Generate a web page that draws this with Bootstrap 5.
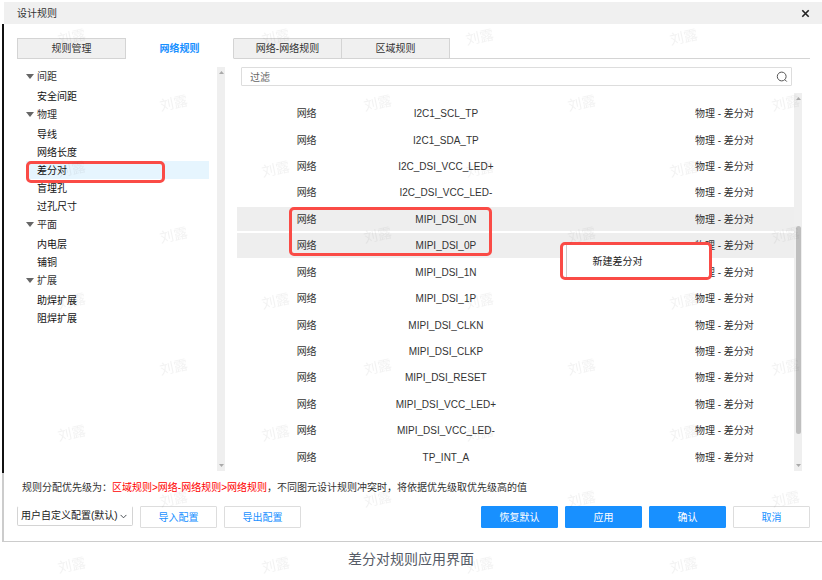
<!DOCTYPE html>
<html lang="zh-CN">
<head>
<meta charset="utf-8">
<meta name="viewport" content="width=device-width, initial-scale=1">
<title>设计规则</title>
<link href="https://cdn.jsdelivr.net/npm/bootstrap@5.3.0/dist/css/bootstrap.min.css" rel="stylesheet">
<style>
  :root { --accent: #1890ff; --line: #d4d4d4; --alert: #fa4b46; --track: #efefef; }
  body { font: 10px/20px "Liberation Sans", "Noto Sans CJK SC", sans-serif; color: #333; background: #fff; }
  .page { overflow: hidden; }
  .dialog { margin: 2px 0 0 2px; border-bottom: 1px solid #ccc; }
  .title-bar { height: 22px; margin-left: 2px; padding: 0 12px 0 13px; background: #f0f0f0; }
  .title-bar h1 { font-size: 10px; line-height: 20px; padding-top: 2px; font-weight: 400; }
  .close-btn { line-height: 0; color: #222; }
  .work-area { border-left: 2px solid #111; padding: 14px 12px 2px 13px; }
  .foot-area { border-left: 2px solid #ccc; padding: 6px 12px 13px 13px; }

  .rule-tabs { border: 0; }
  .rule-tabs .nav-link { width: 108px; height: 21px; padding: 0; border: 1px solid var(--line); border-left-width: 0; border-radius: 0; background: #f0f0f0; color: #333; margin: 0; }
  .rule-tabs .nav-item:first-child .nav-link { border-left-width: 1px; width: 109px; }
  .rule-tabs .nav-link.active { background: #fff; color: var(--accent); font-weight: 700; border-color: transparent var(--line) transparent transparent; }
  .tab-rest { border-bottom: 1px solid var(--line); }

  .panel { padding-top: 8px; gap: 12px; }
  .side { width: 208px; }
  .tree { padding-left: 9px; margin-right: 8px; }
  .tree summary { list-style: none; display: flex; align-items: center; gap: 3px; height: 18px; margin-bottom: 2px; }
  .tree summary::-webkit-details-marker { display: none; }
  .tree summary span { line-height: 18px; padding-top: 2px; }
  .tree a { display: block; height: 18px; padding-left: 11px; color: #111; text-decoration: none; }
  .tree a.current { position: relative; background: #e6f5fe; }
  .ring { position: absolute; border: 3px solid var(--alert); border-radius: 5px; pointer-events: none; }
  .ring-tree { left: 0; top: 0; width: 139px; height: 22px; z-index: 1; }
  .ring-rows { left: 52px; top: 0; width: 203px; height: 49px; z-index: 1; }

  .rail { flex: none; width: 8px; background: var(--track); color: #aaa; padding: 4px 0; }
  .rail svg { display: block; margin: 0 auto; }
  .rail .thumb { flex: 206 0 0; width: 5px; border-radius: 3px; background: #bfbfbf; margin: 0 auto; }
  .rail .before { flex: 125 0 0; }
  .rail .after { flex: 30 0 0; }

  .main-col { min-width: 0; padding-right: 8px; }
  .filter { margin: 0 10px 7px 4px; height: 19px; border: 1px solid #ddd; border-radius: 1px; padding: 0 3px 0 8px; }
  .filter input { border: 0; padding: 2px 0 0; background: none; height: 17px; min-height: 0; font-size: 10px; line-height: 15px; }
  .filter input::placeholder { color: #666; opacity: 1; }
  .filter input:focus { box-shadow: none; outline: 0; }
  .net-table { table-layout: fixed; width: 100%; height: 372px; margin-top: 6px; border-collapse: separate; border-spacing: 0 2px; text-align: center; }
  .net-table td { padding: 2px 0 0; position: relative; line-height: 18px; white-space: nowrap; }
  .net-table tr.picked td { background: #eee; }
  .net-table td.menu-cell { z-index: 2; }
  .context { position: absolute; left: 44px; top: 9px; width: 152px; height: 38px; background: #fff; border: 3px solid var(--alert); border-radius: 5px; padding: 0 1px 0 3px; }
  .context button { width: 100%; height: 32px; border: 0; border-left: 1px solid #ccc; background: #fff; padding: 2px 0 0 26px; text-align: left; color: #222; font-size: 10px; }

  .priority { line-height: 18px; padding-left: 5px; margin-bottom: 9px; }
  .priority strong { font-weight: 400; color: #f00; }
  .profile { width: 116px; height: 20px; padding: 0 10px 0 3px; border: 1px solid var(--line); border-top-color: transparent; border-radius: 2px; font-size: 10px; line-height: 18px; color: #222; background-position: right 5px center; background-size: 7px 7px; }
  .act { width: 77px; height: 22px; padding: 1px 0 0; font-size: 10px; line-height: 20px; border-radius: 1px; --bs-btn-color: var(--accent); --bs-btn-border-color: #ddd; --bs-btn-bg: #fff; }
  .act.solid { --bs-btn-color: #fff; --bs-btn-border-color: var(--accent); --bs-btn-bg: var(--accent); }
  .caption-line { padding-top: 7px; font-size: 14px; line-height: 20px; color: #555b66; }
  .stamp { position: absolute; inset: 0; width: 100%; height: 100%; pointer-events: none; z-index: 5; }
  .stamp text { font: 14px "Noto Sans CJK SC", sans-serif; fill: #000; fill-opacity: .05; }
</style>
</head>
<body>
<div class="page position-relative min-vh-100">
  <section class="dialog">
    <header class="title-bar d-flex align-items-center justify-content-between">
      <h1 class="m-0">设计规则</h1>
      <button type="button" class="close-btn btn p-0 border-0" aria-label="关闭">
        <svg width="9" height="9" viewBox="0 0 9 9" fill="none" stroke="currentColor" stroke-width="1.6"><path d="M1.3 1.3l6.4 6.4M7.7 1.3L1.3 7.7"/></svg>
      </button>
    </header>

    <div class="work-area">
      <div class="d-flex">
        <ul class="nav nav-tabs rule-tabs flex-nowrap">
          <li class="nav-item"><button type="button" class="nav-link">规则管理</button></li>
          <li class="nav-item"><button type="button" class="nav-link active" aria-current="page">网络规则</button></li>
          <li class="nav-item"><button type="button" class="nav-link">网络-网络规则</button></li>
          <li class="nav-item"><button type="button" class="nav-link">区域规则</button></li>
        </ul>
        <div class="tab-rest flex-grow-1"></div>
      </div>

      <div class="panel d-flex">
        <aside class="side d-flex flex-shrink-0">
          <nav class="tree flex-grow-1" aria-label="规则">
            <details open>
              <summary><svg width="8" height="5" viewBox="0 0 8 5"><path d="M0 0h8L4 5z" fill="#666"/></svg><span>间距</span></summary>
              <a href="#">安全间距</a>
            </details>
            <details open>
              <summary><svg width="8" height="5" viewBox="0 0 8 5"><path d="M0 0h8L4 5z" fill="#666"/></svg><span>物理</span></summary>
              <a href="#">导线</a>
              <a href="#">网络长度</a>
              <a href="#" class="current">差分对<span class="ring ring-tree"></span></a>
              <a href="#">盲埋孔</a>
              <a href="#">过孔尺寸</a>
            </details>
            <details open>
              <summary><svg width="8" height="5" viewBox="0 0 8 5"><path d="M0 0h8L4 5z" fill="#666"/></svg><span>平面</span></summary>
              <a href="#">内电层</a>
              <a href="#">铺铜</a>
            </details>
            <details open>
              <summary><svg width="8" height="5" viewBox="0 0 8 5"><path d="M0 0h8L4 5z" fill="#666"/></svg><span>扩展</span></summary>
              <a href="#">助焊扩展</a>
              <a href="#">阻焊扩展</a>
            </details>
          </nav>
          <div class="rail d-flex flex-column justify-content-between">
            <svg width="5" height="3" viewBox="0 0 5 3"><path d="M0 3h5L2.5 0z" fill="currentColor"/></svg>
            <svg width="5" height="3" viewBox="0 0 5 3"><path d="M0 0h5L2.5 3z" fill="currentColor"/></svg>
          </div>
        </aside>

        <div class="main-col d-flex flex-column flex-grow-1">
          <div class="filter d-flex align-items-center">
            <input type="text" class="form-control" placeholder="过滤" aria-label="过滤">
            <svg class="flex-shrink-0" width="12" height="12" viewBox="0 0 12 12" fill="none" stroke="#555" stroke-width="1"><circle cx="5.7" cy="5.5" r="4.4"/><path d="M8.8 8.6l2 2"/></svg>
          </div>
          <div class="d-flex flex-grow-1">
            <div class="flex-grow-1">
              <table class="net-table">
                <tbody>
                  <tr><td>网络</td><td>I2C1_SCL_TP</td><td></td><td>物理 - 差分对</td></tr>
                  <tr><td>网络</td><td>I2C1_SDA_TP</td><td></td><td>物理 - 差分对</td></tr>
                  <tr><td>网络</td><td>I2C_DSI_VCC_LED+</td><td></td><td>物理 - 差分对</td></tr>
                  <tr><td>网络</td><td>I2C_DSI_VCC_LED-</td><td></td><td>物理 - 差分对</td></tr>
                  <tr class="picked"><td class="z-1">网络<span class="ring ring-rows"></span></td><td>MIPI_DSI_0N</td><td></td><td>物理 - 差分对</td></tr>
                  <tr class="picked"><td>网络</td><td>MIPI_DSI_0P</td><td class="menu-cell"><div class="context"><button type="button">新建差分对</button></div></td><td>物理 - 差分对</td></tr>
                  <tr><td>网络</td><td>MIPI_DSI_1N</td><td></td><td>物理 - 差分对</td></tr>
                  <tr><td>网络</td><td>MIPI_DSI_1P</td><td></td><td>物理 - 差分对</td></tr>
                  <tr><td>网络</td><td>MIPI_DSI_CLKN</td><td></td><td>物理 - 差分对</td></tr>
                  <tr><td>网络</td><td>MIPI_DSI_CLKP</td><td></td><td>物理 - 差分对</td></tr>
                  <tr><td>网络</td><td>MIPI_DSI_RESET</td><td></td><td>物理 - 差分对</td></tr>
                  <tr><td>网络</td><td>MIPI_DSI_VCC_LED+</td><td></td><td>物理 - 差分对</td></tr>
                  <tr><td>网络</td><td>MIPI_DSI_VCC_LED-</td><td></td><td>物理 - 差分对</td></tr>
                  <tr><td>网络</td><td>TP_INT_A</td><td></td><td>物理 - 差分对</td></tr>
                </tbody>
              </table>
            </div>
            <div class="rail d-flex flex-column">
              <svg width="5" height="3" viewBox="0 0 5 3"><path d="M0 3h5L2.5 0z" fill="currentColor"/></svg>
              <div class="before"></div>
              <div class="thumb"></div>
              <div class="after"></div>
              <svg width="5" height="3" viewBox="0 0 5 3"><path d="M0 0h5L2.5 3z" fill="currentColor"/></svg>
            </div>
          </div>
        </div>
      </div>
    </div>

    <footer class="foot-area">
      <p class="priority">规则分配优先级为：<strong>区域规则&gt;网络-网络规则&gt;网络规则</strong>，不同图元设计规则冲突时，将依据优先级取优先级高的值</p>
      <div class="d-flex align-items-start justify-content-between">
        <div class="d-flex align-items-start" style="gap: 7px">
          <select class="form-select profile" aria-label="配置"><option>用户自定义配置(默认)</option></select>
          <button type="button" class="btn act">导入配置</button>
          <button type="button" class="btn act">导出配置</button>
        </div>
        <div class="d-flex" style="gap: 7px">
          <button type="button" class="btn act solid">恢复默认</button>
          <button type="button" class="btn act solid">应用</button>
          <button type="button" class="btn act solid">确认</button>
          <button type="button" class="btn act">取消</button>
        </div>
      </div>
    </footer>
  </section>
  <p class="caption-line text-center m-0">差分对规则应用界面</p>

  <svg class="stamp" aria-hidden="true">
    <defs>
      <pattern id="stamp-tile" width="204" height="132" patternUnits="userSpaceOnUse">
        <text transform="translate(59 45) rotate(-12)">刘露</text>
        <text transform="translate(161 111) rotate(-12)">刘露</text>
      </pattern>
    </defs>
    <rect width="100%" height="100%" fill="url(#stamp-tile)"/>
  </svg>
</div>
<script src="https://cdn.jsdelivr.net/npm/bootstrap@5.3.0/dist/js/bootstrap.bundle.min.js"></script>
</body>
</html>
